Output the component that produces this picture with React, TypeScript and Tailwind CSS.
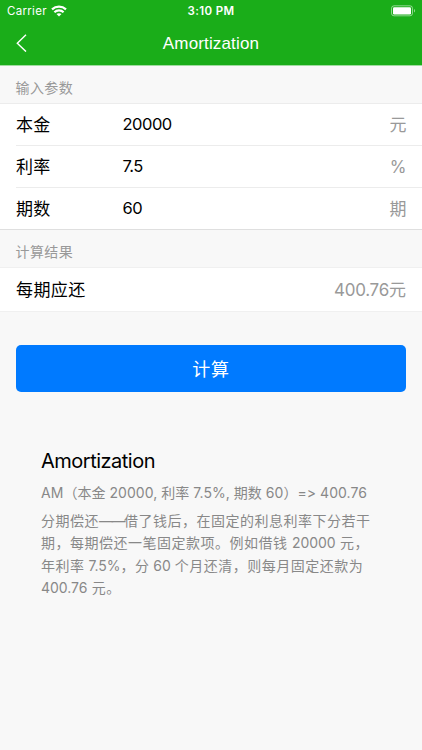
import type { ReactNode } from 'react';

const params = [
  { label: '本金', value: '20000', unit: '元' },
  { label: '利率', value: '7.5', unit: '%' },
  { label: '期数', value: '60', unit: '期' },
];

function StatusBar() {
  return (
    <div className="grid h-[22px] grid-cols-3 items-center text-[11.5px] leading-[20px]">
      <div className="flex items-center gap-[4px] pl-[7px] tracking-[0.3px]">
        <span>Carrier</span>
        <svg width="16" height="12" viewBox="0 0 16 12" fill="none" stroke="currentColor" strokeWidth="2.2">
          <path d="M1 4.4C5 .7 11 .7 15 4.4" />
          <path d="M3.4 7.2c2.6-2.4 6.6-2.4 9.2 0" />
          <path d="M5.5 9.1c1.4-1.3 3.6-1.3 5 0L8 11.6z" fill="currentColor" stroke="none" />
        </svg>
      </div>
      <div className="text-center font-semibold tracking-[0.35px]">3:10 PM</div>
      <div className="flex justify-end pr-[6px]">
        <svg width="25" height="12" viewBox="0 0 25 12">
          <rect x=".5" y=".8" width="21" height="10" rx="2.5" fill="none" stroke="white" strokeOpacity=".5" />
          <rect x="2" y="2.2" width="18" height="7.2" rx="1.2" fill="white" />
          <path d="M23 4v3.6c1.5-.6 1.5-3 0-3.6" fill="white" fillOpacity=".5" />
        </svg>
      </div>
    </div>
  );
}

function SectionTitle({ children }: { children: ReactNode }) {
  return (
    <h2 className="h-[37px] pl-[15.5px] pt-[12px] text-[14px] leading-[20px] tracking-[0.4px] text-[#999]">
      {children}
    </h2>
  );
}

function Latin({ children }: { children: ReactNode }) {
  return <span className="tracking-[-0.05px]">{children}</span>;
}

export default function App() {
  return (
    <div className="h-[750px] w-[422px] overflow-hidden bg-[#f8f8f8] font-['Inter','Noto_Sans_CJK_SC',sans-serif] text-black">
      <header className="h-[66px] border-b border-[#a0dca0] bg-[#1aad19] text-white">
        <StatusBar />
        <div className="grid h-[42px] grid-cols-3 items-center">
          <svg className="ml-[16px]" width="12" height="18" viewBox="0 0 12 18" fill="none" stroke="currentColor" strokeWidth="1.4">
            <path d="M10 .8 1.3 9.2 10 17.6" />
          </svg>
          <h1 className="pt-[2px] text-center font-['Liberation_Sans',sans-serif] text-[17px] tracking-[0.15px]">Amortization</h1>
        </div>
      </header>

      <SectionTitle>输入参数</SectionTitle>
      <section className="border-y border-t-[#ececec] border-b-[#dfdfdf] bg-white text-[17px]">
        {params.map((p, i) => (
          <div
            key={p.label}
            className={`ml-[16px] flex items-center pr-[15.5px] ${i ? 'h-[42px] border-t border-[#ececec]' : 'h-[41px]'}`}
          >
            <span className="w-[106.5px] pt-[2px] tracking-[0.3px]">{p.label}</span>
            <span className="flex-1 text-[16.5px] tracking-[-0.5px]">{p.value}</span>
            <span className="pt-[2px] text-[#999]">{p.unit}</span>
          </div>
        ))}
      </section>

      <SectionTitle>计算结果</SectionTitle>
      <section className="flex h-[45px] items-center justify-between border-y border-[#f0f0f0] bg-white px-[16px] pt-[2px] text-[17px]">
        <span className="tracking-[0.4px]">每期应还</span>
        <span className="text-[#999]"><span className="tracking-[-0.25px]">400.76</span>元</span>
      </section>

      <button className="mx-[16px] mt-[33px] flex h-[47px] w-[390px] items-center justify-center rounded-[5px] bg-[#007aff] pt-[2px] text-[18px] tracking-[0.7px] text-white">
        计算
      </button>

      <article className="whitespace-nowrap px-[41px] pt-[55px] text-[14px] text-[#888]">
        <h3 className="text-[20px] leading-[28px] tracking-[-0.5px] text-black">Amortization</h3>
        <p className="mt-[7px] leading-[22px] tracking-[0.04px] [font-feature-settings:'calt'_0]">
          AM（本金 20000, 利率 7.5%, 期数 60）=&gt; 400.76
        </p>
        <p className="mt-[6px] leading-[22.4px] tracking-[0.5px]">
          <span className="block">分期偿还<span className="tracking-[-1.5px]">——</span>借了钱后，在固定的利息利率下分若干</span>
          <span className="block">期，每期偿还一笔固定款项。例如借钱 <Latin>20000</Latin> 元，</span>
          <span className="block">年利率<Latin> 7.5%</Latin>，分<Latin> 60 </Latin>个月还清，则每月固定还款为</span>
          <span className="block"><Latin>400.76</Latin> 元。</span>
        </p>
      </article>
    </div>
  );
}
